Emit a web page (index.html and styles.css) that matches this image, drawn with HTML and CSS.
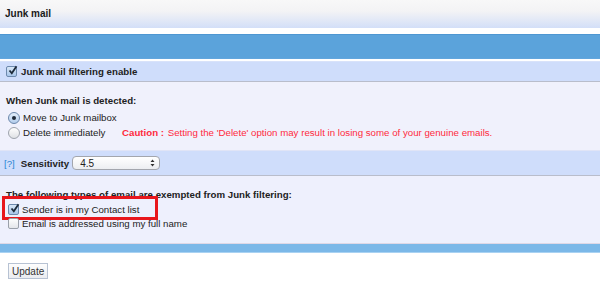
FILE: index.html
```html
<!DOCTYPE html>
<html lang="en">
<head>
  <meta charset="UTF-8">
  <title>Junk mail</title>
  <link rel="stylesheet" href="styles.css">
</head>
<body>
  <div class="page-title">Junk mail</div>
  <div class="top-bar"></div>

  <div class="row-head">
    <span class="check checked">
      <svg width="11" height="11" viewBox="0 0 11 11"><path d="M2.5 5.5 L4.8 8.3 L9.5 1.2" fill="none" stroke="#1d2a3a" stroke-width="1.8"/></svg>
    </span>
    <b>Junk mail filtering enable</b>
  </div>

  <div class="section first">
    <div class="section-title">When Junk mail is detected:</div>
    <div class="opt">
      <span class="radio on"><span class="dot"></span></span>
      <span>Move to Junk mailbox</span>
    </div>
    <div class="opt">
      <span class="radio"></span>
      <span class="opt-label">Delete immediately</span>
      <span class="caution"><b>Caution :</b> Setting the 'Delete' option may result in losing some of your genuine emails.</span>
    </div>
  </div>

  <div class="row-head sens">
    <span class="help">[?]</span>
    <b>Sensitivity</b>
    <span class="select">
      <span>4.5</span>
      <svg width="5" height="8" viewBox="0 0 5 8"><path d="M0.5 3 L2.5 0.5 L4.5 3 Z M0.5 5 L2.5 7.5 L4.5 5 Z" fill="#333"/></svg>
    </span>
  </div>

  <div class="section second">
    <div class="section-title">The following types of email are exempted from Junk filtering:</div>
    <div class="opt marked">
      <span class="check checked">
        <svg width="11" height="11" viewBox="0 0 11 11"><path d="M2.5 5.5 L4.8 8.3 L9.5 1.2" fill="none" stroke="#1d2a3a" stroke-width="1.8"/></svg>
      </span>
      <span>Sender is in my Contact list</span>
    </div>
    <div class="opt">
      <span class="check"></span>
      <span>Email is addressed using my full name</span>
    </div>
  </div>

  <div class="bottom-bar"></div>

  <div class="actions">
    <button class="update">Update</button>
  </div>
</body>
</html>
```

FILE: styles.css
```css
body { margin: 0; background: #fff; font-family: 'Liberation Sans', Arial, sans-serif; font-size: 9.7px; color: #222; }
b { font-weight: 700; }

.page-title { height: 28px; box-sizing: border-box; padding: 8px 5px 0; font-size: 10px; font-weight: 700; color: #1a1a1a; background: linear-gradient(#f8f8f8, #f3f3f5 40%, #d3dff8); }
.top-bar { margin-top: 6px; height: 25px; box-sizing: border-box; background: #5ba3db; border-top: 1px solid #4e97d2; border-bottom: 1px solid #62a6dd; }

.row-head { margin-top: 2px; height: 21px; box-sizing: border-box; background: #cfddfb; border-top: 1px solid #d8e2fa; border-bottom: 1px solid #b9bdcb; display: flex; align-items: center; padding-left: 6px; gap: 4px; }
.row-head.sens { margin-top: 0; height: 26px; padding-left: 4px; gap: 6px; border-top: 1px solid #e0e4f6; }

.section { background: #f0f1fc; padding: 11px 6px 0; }
.section.first { height: 68px; box-sizing: border-box; padding-top: 13px; }
.section.second { height: 68px; box-sizing: border-box; padding-top: 13px; background: #eef0fd; border-bottom: 1px solid #ded8e6; }
.section-title { font-weight: 700; height: 13px; margin-bottom: 2px; }
.second .section-title { margin-bottom: 0; }

.opt { display: flex; align-items: center; height: 14px; gap: 3px; padding-left: 2px; }
.first .opt { height: 15px; }
.opt-label { width: 96px; }
.caution { color: #ff2a3c; }
.caution b { margin-right: 1px; }

.check { width: 11px; height: 11px; box-sizing: border-box; border: 1px solid #9aa0aa; border-radius: 2px; background: linear-gradient(#fdfdfd, #e4e6ea); display: inline-flex; position: relative; }
.check svg { position: absolute; left: 0; top: -2px; }
.check.checked { background: linear-gradient(#d9e7f7, #a8c6ea); border-color: #6d89ad; }

.radio { width: 12px; height: 12px; box-sizing: border-box; border: 1px solid #9ea3ac; border-radius: 50%; background: linear-gradient(#fefefe, #dfe1e5); display: inline-flex; align-items: center; justify-content: center; }
.radio.on { background: linear-gradient(#e3eefa, #b3cdec); border-color: #6b87ab; }
.radio .dot { width: 4px; height: 4px; border-radius: 50%; background: #1f2a38; }

.help { color: #2a86d4; }
.select { margin-left: -3px; width: 88px; height: 14px; box-sizing: border-box; border: 1px solid #a3a6ad; border-radius: 4px; background: linear-gradient(#ffffff, #eceef1); display: inline-flex; align-items: center; justify-content: space-between; padding: 0 4px 0 7px; font-size: 10px; color: #222; }

.marked { position: relative; }
.marked::after { content: ""; position: absolute; left: -4px; top: -6px; width: 156px; height: 24px; box-sizing: border-box; border: 3px solid #e8161c; }

.bottom-bar { height: 9px; background: #7bb8e8; border-bottom: 1px solid #a9d2f2; box-sizing: border-box; }

.actions { padding: 10px 8px; }
.update { font-family: 'Liberation Sans', Arial, sans-serif; font-size: 10px; color: #333; padding: 1px 3px; height: 16px; border: 1px solid #b7c2d3; border-radius: 0; background: linear-gradient(#fdfdfd, #eaecf0); }
```
